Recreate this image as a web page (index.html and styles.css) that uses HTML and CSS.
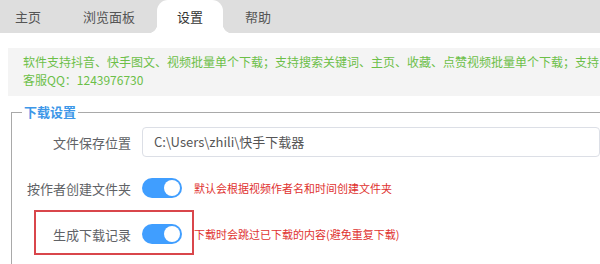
FILE: index.html
```html
<!DOCTYPE html>
<html lang="zh-CN">
<head>
<meta charset="utf-8">
<title>设置</title>
<link rel="stylesheet" href="styles.css">
</head>
<body>
<div class="tabs">
  <div class="tab first">主页</div>
  <div class="tab">浏览面板</div>
  <div class="tab active">设置</div>
  <div class="tab">帮助</div>
</div>
<div class="notice">
  <div class="line">软件支持抖音、快手图文、视频批量单个下载；支持搜索关键词、主页、收藏、点赞视频批量单个下载；支持</div>
  <div class="line">客服QQ：1243976730</div>
</div>
<fieldset class="group">
  <legend class="legend">下载设置</legend>
  <div class="row">
    <span class="label">文件保存位置</span>
    <div class="input">C:\Users\zhili\快手下载器</div>
  </div>
  <div class="row">
    <span class="label">按作者创建文件夹</span>
    <span class="switch"><span class="knob"></span></span>
    <span class="hint">默认会根据视频作者名和时间创建文件夹</span>
  </div>
  <div class="row marked">
    <span class="label">生成下载记录</span>
    <span class="switch"><span class="knob"></span></span>
    <span class="hint">下载时会跳过已下载的内容(避免重复下载)</span>
    <span class="annot"></span>
  </div>
</fieldset>
</body>
</html>
```
FILE: styles.css
```css
html, body {
  margin: 0;
  padding: 0;
  background: #fff;
  overflow: hidden;
}
body {
  width: 600px;
  height: 264px;
  font-family: "Noto Sans CJK SC", "Noto Sans", sans-serif;
  color: #555;
}
.tabs {
  display: flex;
  gap: 2px;
  height: 33px;
  background: #dedede;
}
.tab {
  padding: 0 20px;
  font-size: 13px;
  line-height: 33px;
  color: #555;
  white-space: nowrap;
}
.tab.first {
  padding-left: 15px;
}
.tab.active {
  position: relative;
  background: #fff;
  color: #333;
  border-radius: 11px 11px 0 0;
}
.tab.active::before,
.tab.active::after {
  content: "";
  position: absolute;
  bottom: 0;
  width: 9px;
  height: 9px;
}
.tab.active::before {
  left: -9px;
  background: radial-gradient(circle at 0 0, transparent 9px, #fff 9.5px);
}
.tab.active::after {
  right: -9px;
  background: radial-gradient(circle at 100% 0, transparent 9px, #fff 9.5px);
}
.notice {
  margin: 15px 0 0 8px;
  padding: 5px 0 7px 15px;
  background: #f4f4f4;
  color: #6cbf48;
  font-size: 12px;
  line-height: 18px;
  white-space: nowrap;
  overflow: hidden;
}
.group {
  margin: 7px 0 0 11px;
  padding: 6px 0 16px 0;
  border: 1px solid #a9a9a9;
  border-right: none;
  border-bottom: none;
  min-inline-size: 0;
}
.legend {
  margin-left: 10px;
  padding: 0 2px;
  font-size: 13px;
  line-height: 18px;
  font-weight: bold;
  color: #3d97e8;
}
.row {
  display: flex;
  align-items: center;
  height: 30px;
  margin-bottom: 16px;
}
.row:last-child {
  margin-bottom: 0;
}
.row.marked {
  position: relative;
}
.label {
  width: 119px;
  margin-right: 11px;
  text-align: right;
  font-size: 13px;
  color: #606266;
  white-space: nowrap;
}
.input {
  box-sizing: border-box;
  flex: 1;
  height: 30px;
  padding: 0 11px;
  border: 1px solid #dcdfe6;
  border-radius: 4px;
  font-size: 13px;
  line-height: 28px;
  color: #555;
  white-space: nowrap;
}
.switch {
  position: relative;
  width: 40px;
  height: 20px;
  border-radius: 10px;
  background: #409eff;
  flex: none;
}
.knob {
  position: absolute;
  top: 2px;
  right: 2px;
  width: 16px;
  height: 16px;
  border-radius: 50%;
  background: #fff;
}
.hint {
  margin-left: 12px;
  font-size: 11px;
  color: #e0322f;
  white-space: nowrap;
}
.annot {
  position: absolute;
  left: 22px;
  top: -9px;
  box-sizing: border-box;
  width: 160px;
  height: 45px;
  border: 2px solid #d9464b;
}
```
